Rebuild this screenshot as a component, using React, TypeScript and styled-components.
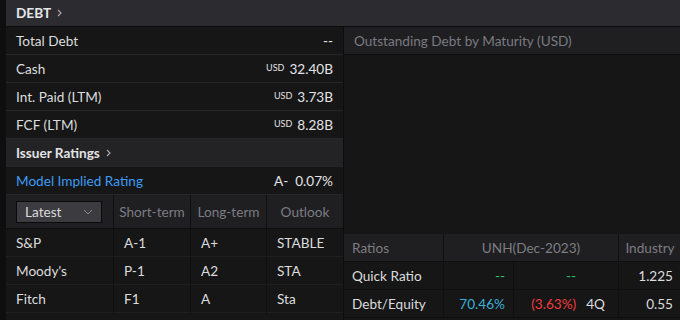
import React from 'react';
import styled, { createGlobalStyle } from 'styled-components';

const GlobalStyle = createGlobalStyle`
  html, body {
    margin: 0;
    padding: 0;
    background: #0e0e0f;
  }
  body {
    font-family: Lato, "Open Sans", Arial, sans-serif;
    -webkit-font-smoothing: antialiased;
  }
`;

const Page = styled.div`
  width: 680px;
  height: 320px;
  box-sizing: border-box;
  padding-left: 6px;
  background: #0e0e0f;
  display: flex;
  flex-direction: column;
  overflow: hidden;
  font-size: 13.6px;
`;

const SectionHeader = styled.div`
  height: 26px;
  flex: none;
  display: flex;
  align-items: center;
  gap: 6px;
  padding-left: 10px;
  background: #2c2c30;
  border-bottom: 1px solid #0c0c0d;
  color: #e6e6e8;
  font-weight: 700;
`;

const Body = styled.div`
  flex: 1;
  display: grid;
  grid-template-columns: 337px 336px;
  column-gap: 1px;
  background: #0c0c0d;
`;

const LeftColumn = styled.div`
  display: flex;
  flex-direction: column;
  background: #161616;
`;

const Row = styled.div<{ $bg?: string }>`
  height: 27px;
  flex: none;
  display: flex;
  align-items: center;
  justify-content: space-between;
  padding: 0 10px;
  background: ${(p) => p.$bg ?? '#161616'};
  border-bottom: 1px solid #262628;
  color: #dcdcde;
`;

const SubHeader = styled.span`
  display: flex;
  align-items: center;
  gap: 6px;
  font-weight: 700;
  color: #e2e2e4;
`;

const LinkText = styled.span`
  color: #3d9bf5;
`;

const Value = styled.span`
  display: flex;
  align-items: baseline;
  gap: 5px;
  color: #e4e4e6;
`;

const Currency = styled.span`
  font-size: 9px;
  position: relative;
  top: -3px;
`;

const RatingGrid = styled.div`
  display: grid;
  grid-template-columns: 107px 76px 75px 76px;
  column-gap: 1px;
  background: #0f0f10;
`;

const HeadCell = styled.div`
  height: 33px;
  display: flex;
  align-items: center;
  justify-content: center;
  background: #1f1f21;
  border-bottom: 1px solid #0f0f10;
  color: #7c7c84;
`;

const DropCell = styled(HeadCell)`
  justify-content: flex-start;
  padding-left: 10px;
`;

const Dropdown = styled.div`
  width: 86px;
  height: 22px;
  box-sizing: border-box;
  display: flex;
  align-items: center;
  justify-content: space-between;
  padding: 0 8px;
  background: #3b3b40;
  border: 1px solid #0a0a0a;
  color: #dadadc;
`;

const BodyCell = styled.div`
  height: 27px;
  display: flex;
  align-items: center;
  padding-left: 10px;
  background: #161616;
  border-bottom: 1px solid #1f1f21;
  color: #dcdcde;
`;

const RightColumn = styled.div`
  display: flex;
  flex-direction: column;
  background: #161616;
`;

const ChartTitle = styled.div`
  height: 27px;
  flex: none;
  display: flex;
  align-items: center;
  padding-left: 10px;
  background: #1f1f21;
  border-bottom: 1px solid #0c0c0d;
  color: #7a7a82;
`;

const ChartArea = styled.div`
  height: 179px;
  flex: none;
  background: #161616;
`;

const RatioGrid = styled.div`
  display: grid;
  grid-template-columns: 99px 69px 104px 62px;
  column-gap: 1px;
  background: #0f0f10;
`;

const RatioHead = styled.div<{ $span?: number; $align?: string }>`
  grid-column: span ${(p) => p.$span ?? 1};
  height: 27px;
  display: flex;
  align-items: center;
  justify-content: ${(p) => p.$align ?? 'flex-start'};
  padding: 0 8px;
  background: #1f1f21;
  border-bottom: 1px solid #0f0f10;
  color: #7c7c84;
`;

const RatioCell = styled.div<{ $align?: string; $color?: string; $pr?: number }>`
  height: 27px;
  display: flex;
  align-items: center;
  justify-content: ${(p) => p.$align ?? 'flex-end'};
  gap: 10px;
  padding: 0 ${(p) => p.$pr ?? 8}px 0 8px;
  background: #161616;
  border-bottom: 1px solid #0f0f10;
  color: ${(p) => p.$color ?? '#dcdcde'};
`;

const Colored = styled.span<{ $color: string }>`
  color: ${(p) => p.$color};
`;

const ChevronRight = () => (
  <svg width="5" height="8" viewBox="0 0 5 8" fill="none">
    <path d="M1 1l3 3-3 3" stroke="#a4a4aa" strokeWidth="1.2" />
  </svg>
);

const ChevronDown = () => (
  <svg width="10" height="6" viewBox="0 0 10 6" fill="none">
    <path d="M1 1l4 4 4-4" stroke="#8a8a90" strokeWidth="1" />
  </svg>
);

const metrics = [
  { label: 'Total Debt', value: '--' },
  { label: 'Cash', currency: 'USD', value: '32.40B' },
  { label: 'Int. Paid (LTM)', currency: 'USD', value: '3.73B' },
  { label: 'FCF (LTM)', currency: 'USD', value: '8.28B' },
];

const ratings = [
  ['S&P', 'A-1', 'A+', 'STABLE'],
  ["Moody's", 'P-1', 'A2', 'STA'],
  ['Fitch', 'F1', 'A', 'Sta'],
];

export default function App() {
  return (
    <>
      <GlobalStyle />
      <Page>
        <SectionHeader>
          DEBT <ChevronRight />
        </SectionHeader>
        <Body>
          <LeftColumn>
            {metrics.map((m) => (
              <Row key={m.label}>
                <span>{m.label}</span>
                <Value>
                  {m.currency && <Currency>{m.currency}</Currency>}
                  {m.value}
                </Value>
              </Row>
            ))}
            <Row $bg="#232326">
              <SubHeader>
                Issuer Ratings <ChevronRight />
              </SubHeader>
            </Row>
            <Row>
              <LinkText>Model Implied Rating</LinkText>
              <Value>A-&nbsp;&nbsp;0.07%</Value>
            </Row>
            <RatingGrid>
              <DropCell>
                <Dropdown>
                  Latest <ChevronDown />
                </Dropdown>
              </DropCell>
              <HeadCell>Short-term</HeadCell>
              <HeadCell>Long-term</HeadCell>
              <HeadCell>Outlook</HeadCell>
              {ratings.map((r) =>
                r.map((c, i) => <BodyCell key={r[0] + i}>{c}</BodyCell>)
              )}
            </RatingGrid>
          </LeftColumn>
          <RightColumn>
            <ChartTitle>Outstanding Debt by Maturity (USD)</ChartTitle>
            <ChartArea />
            <RatioGrid>
              <RatioHead>Ratios</RatioHead>
              <RatioHead $span={2} $align="center">
                UNH(Dec-2023)
              </RatioHead>
              <RatioHead $align="center">Industry</RatioHead>
              <RatioCell $align="flex-start">Quick Ratio</RatioCell>
              <RatioCell $color="#2fc25b">--</RatioCell>
              <RatioCell $color="#2fc25b" $pr={42}>
                --
              </RatioCell>
              <RatioCell>1.225</RatioCell>
              <RatioCell $align="flex-start">Debt/Equity</RatioCell>
              <RatioCell $color="#3bb0d6">70.46%</RatioCell>
              <RatioCell $pr={13}>
                <Colored $color="#f23b3b">(3.63%)</Colored>
                <span>4Q</span>
              </RatioCell>
              <RatioCell>0.55</RatioCell>
            </RatioGrid>
          </RightColumn>
        </Body>
      </Page>
    </>
  );
}
